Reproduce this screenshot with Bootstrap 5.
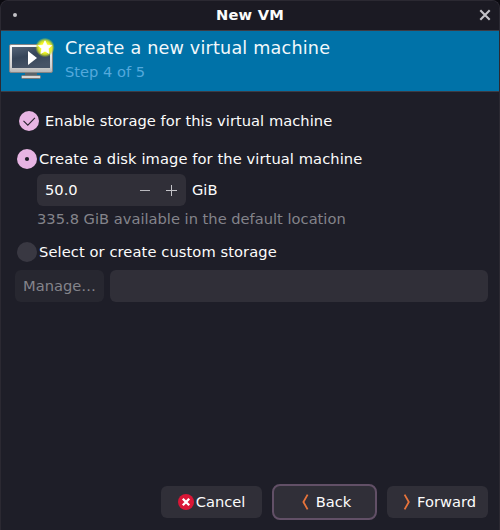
<!DOCTYPE html>
<html lang="en">
<head>
<meta charset="utf-8">
<meta name="viewport" content="width=device-width, initial-scale=1">
<title>New VM</title>
<link href="https://cdn.jsdelivr.net/npm/bootstrap@5.3.0/dist/css/bootstrap.min.css" rel="stylesheet">
<style>
  html { background: #0b0a10; }
  body { margin: 0; background: #0b0a10; color: #fcfcfc; font: 14.67px/20px "DejaVu Sans", sans-serif; overflow: hidden; white-space: nowrap; }
  .vm-window { width: 500px; height: 530px; background: #1e1e28; border: 1px solid #2b2932; border-width: 1px 1px 0 1px; border-radius: 8px 8px 0 0; }
  .title-bar { height: 29px; background: #1b1a23; border-radius: 7px 7px 0 0; }
  .title-side { width: 28px; height: 29px; }
  .title-text { padding-bottom: 2px; font-size: 14.67px; font-weight: 700; letter-spacing: .2px; }
  .banner { height: 62px; background: #0072a8; border: 1px solid #3d3c45; border-width: 1px 0; padding: 0 0 0 7px; }
  .banner-copy { margin-left: 9px; padding-top: 5px; }
  .banner-title { font-size: 17.6px; letter-spacing: .19px; line-height: 24px; color: #f2f8fb; }
  .banner-step { line-height: 24px; color: #54a9dc; }
  .form-area { padding: 19px 11px 0 14px; }
  .option-row { height: 20px; }
  .enable-row { padding-left: 4px; gap: 6px; letter-spacing: .04px; }
  .radio-row { padding-left: 2px; gap: 2px; letter-spacing: .09px; }
  .disk-row { margin-top: 18px; }
  .size-row { margin-top: 5px; gap: 6px; }
  .custom-row { margin-top: 13px; }
  .path-row { margin-top: 8px; gap: 6px; }
  .round-mark { width: 20px; height: 20px; border-radius: 50%; background: #e7b4e3; flex: none; }
  .round-mark.off { background: #393842; }
  .indent { margin-left: 22px; }
  .field { height: 32px; background: #302f38; border-radius: 6px; }
  .spin { width: 149px; padding: 0 8px; }
  .spin svg { margin-left: 15px; }
  .hint { margin-top: 3px; color: #84848b; }
  .manage { width: 89px; background: #272730; color: #84848b; }
  .act { width: 101px; height: 32px; padding: 0; border: 0; border-radius: 6px; font-size: inherit; line-height: 20px; background: #302f38; color: #fcfcfc; gap: 2px; }
  .act:hover { background: #393842; color: #fcfcfc; }
  .act.current { width: 105px; height: 36px; border: 2px solid #625067; border-radius: 8px; }
  .actions { padding: 0 11px 10px 0; gap: 10px; }
</style>
<script src="https://cdn.jsdelivr.net/npm/bootstrap@5.3.0/dist/js/bootstrap.bundle.min.js"></script>
</head>
<body>
<main class="vm-window d-flex flex-column">
  <header class="title-bar d-flex align-items-center justify-content-between">
    <svg class="title-side" viewBox="0 0 28 29"><circle cx="14" cy="14" r="2" fill="#c2c1c6"/></svg>
    <span class="title-text">New VM</span>
    <svg class="title-side" viewBox="0 0 28 29"><path d="M9.3 9.3l9.4 9.4M18.7 9.3l-9.4 9.4" stroke="#c4c3c9" stroke-width="2.1"/></svg>
  </header>
  <section class="banner d-flex">
    <svg width="48" height="60" viewBox="8 31 48 60" class="flex-shrink-0">
      <defs>
        <linearGradient id="frame" x2="0" y2="1"><stop offset="0" stop-color="#fafafa"/><stop offset=".8" stop-color="#cfcfcf"/><stop offset="1" stop-color="#b4b4b4"/></linearGradient>
        <linearGradient id="glass" x2=".4" y2="1"><stop offset="0" stop-color="#556477"/><stop offset=".5" stop-color="#364559"/><stop offset="1" stop-color="#465366"/></linearGradient>
        <radialGradient id="glow"><stop offset="0" stop-color="#ffff20"/><stop offset=".55" stop-color="#f2f522"/><stop offset=".75" stop-color="#d6e424" stop-opacity=".8"/><stop offset="1" stop-color="#b4d630" stop-opacity="0"/></radialGradient>
      </defs>
      <path d="M25 72h12v4H25z" fill="#59636a"/>
      <rect x="21.5" y="75.5" width="19" height="3" rx="1" fill="#d6d6d6" stroke="#77797a"/>
      <rect x="9.5" y="44.5" width="43" height="28" rx="1.5" fill="url(#frame)" stroke="#858585"/>
      <rect x="12" y="47" width="38" height="21" fill="url(#glass)"/>
      <path d="M28 51v14l9-7z" fill="#fff"/>
      <circle cx="45" cy="47.5" r="9.8" fill="url(#glow)"/>
      <path d="M45 40.8l2 4.3 4.6.5-3.4 3.2.9 4.6-4.1-2.3-4.1 2.3.9-4.6-3.4-3.2 4.6-.5z" fill="#fff" stroke="#fff" stroke-width=".8" stroke-linejoin="round"/>
    </svg>
    <div class="banner-copy">
      <div class="banner-title">Create a new virtual machine</div>
      <div class="banner-step">Step 4 of 5</div>
    </div>
  </section>
  <section class="form-area d-flex flex-column flex-grow-1">
    <div class="option-row enable-row d-flex align-items-center">
      <svg class="round-mark" viewBox="0 0 20 20"><path d="M4.5 9.8l4.3 4.4 7.1-7.4" fill="none" stroke="#2b2531" stroke-width="1.1"/></svg>
      <span>Enable storage for this virtual machine</span>
    </div>
    <div class="option-row radio-row disk-row d-flex align-items-center">
      <svg class="round-mark" viewBox="0 0 20 20"><circle cx="10" cy="10" r="2.1" fill="#1e1e28"/></svg>
      <span>Create a disk image for the virtual machine</span>
    </div>
    <div class="indent size-row d-flex align-items-center">
      <div class="field spin d-flex align-items-center">
        <span class="me-auto">50.0</span>
        <svg width="12" height="12" viewBox="0 0 12 12"><path d="M1 6.5h10" stroke="#b9b9be"/></svg>
        <svg width="12" height="12" viewBox="0 0 12 12"><path d="M0 6.5h11M5.5 1v11" stroke="#c4c4c9"/></svg>
      </div>
      <span>GiB</span>
    </div>
    <div class="indent hint">335.8 GiB available in the default location</div>
    <div class="option-row radio-row custom-row d-flex align-items-center">
      <span class="round-mark off"></span><span>Select or create custom storage</span>
    </div>
    <div class="path-row d-flex">
      <div class="field manage d-flex align-items-center justify-content-center">Manage…</div>
      <div class="field flex-grow-1"></div>
    </div>
  </section>
  <footer class="actions d-flex align-items-center justify-content-end">
    <button class="btn act d-flex align-items-center justify-content-center" type="button">
      <svg width="16" height="16" viewBox="0 0 16 16"><circle cx="8" cy="8" r="8" fill="#da1636"/><path d="M4.8 4.8l6.4 6.4M11.2 4.8l-6.4 6.4" stroke="#fff" stroke-width="2.3"/></svg><span>Cancel</span>
    </button>
    <button class="btn act current d-flex align-items-center justify-content-center" type="button">
      <svg width="16" height="16" viewBox="0 0 16 16"><path d="M9.6.6L5.4 8l4.2 7.4" fill="none" stroke="#e8743b" stroke-width="1.8"/></svg><span>Back</span>
    </button>
    <button class="btn act d-flex align-items-center justify-content-center" type="button">
      <svg width="16" height="16" viewBox="0 0 16 16"><path d="M5.6.6L9.8 8l-4.2 7.4" fill="none" stroke="#e8743b" stroke-width="1.8"/></svg><span>Forward</span>
    </button>
  </footer>
</main>
</body>
</html>
